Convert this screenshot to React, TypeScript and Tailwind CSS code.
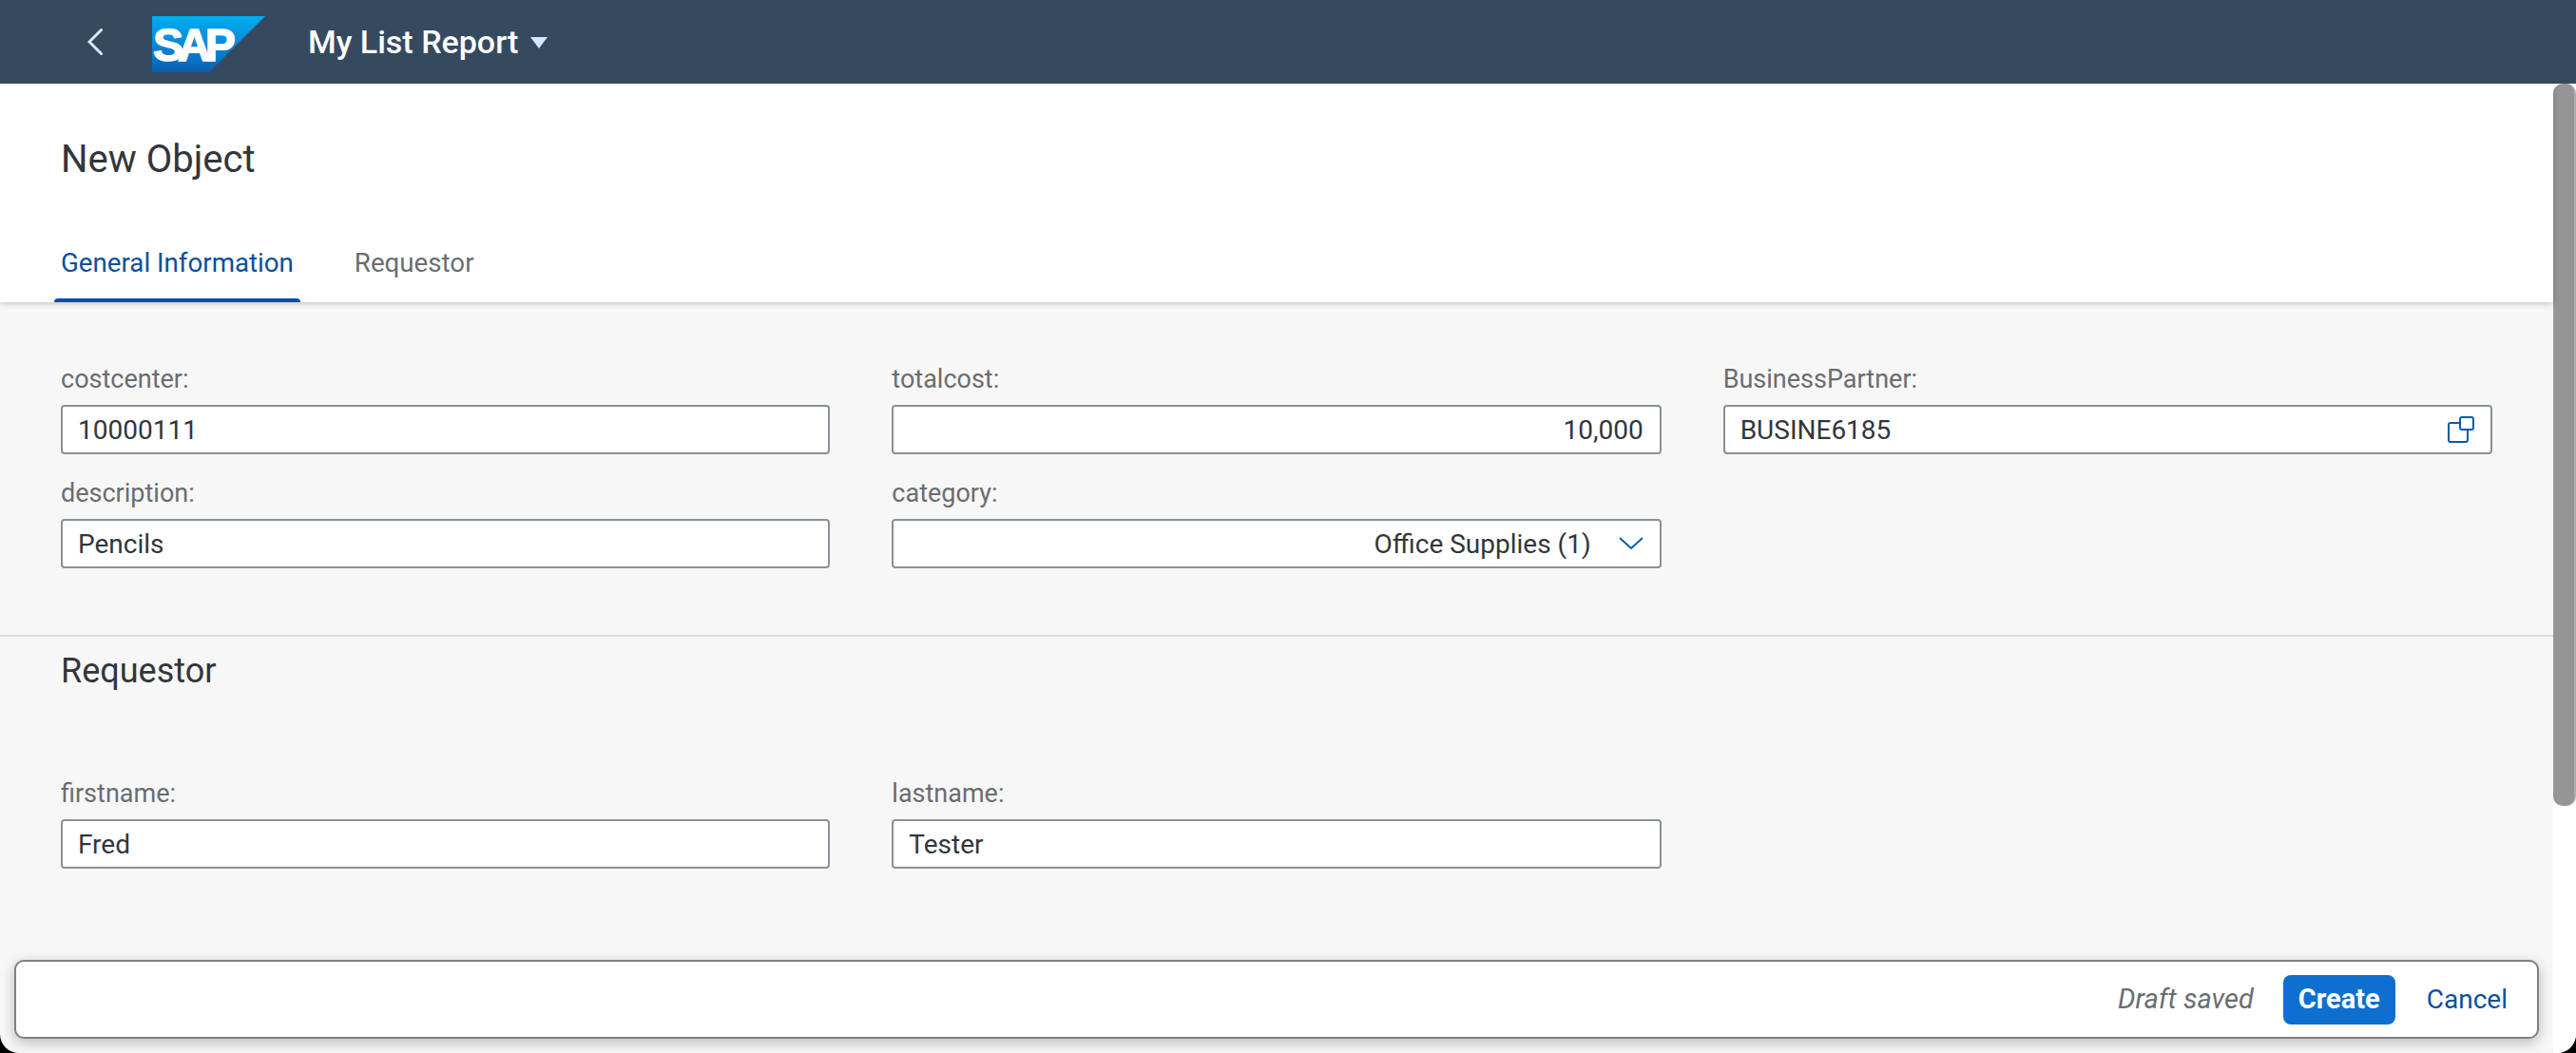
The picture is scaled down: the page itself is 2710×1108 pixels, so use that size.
const font = { fontFamily: 'Roboto, "Noto Sans", sans-serif' };

function Field({ label, value, right, icon }: { label: string; value: string; right?: boolean; icon?: React.ReactNode }) {
    return (
        <div className="flex flex-col">
            <label className="h-[48px] text-[27px] leading-[43px] text-[#6a6d70]">{label}</label>
            <div className="flex h-[52px] items-center rounded-[4px] border-2 border-[#89919a] bg-white pl-[16px] pr-[17px] text-[28px] text-[#32363a]">
                <span className={right ? "flex-1 pt-[1px] text-right" : "flex-1 pt-[1px]"}>{value}</span>
                {icon}
            </div>
        </div>
    );
}

function ValueHelpIcon() {
    return (
        <svg className="ml-3 h-[28px] w-[28px] text-[#0a5ba8]" viewBox="0 0 28 28" fill="none" stroke="currentColor" strokeWidth="2">
            <rect x="13" y="1" width="14" height="13" rx="2" />
            <path d="M12 7H3a2 2 0 0 0-2 2v16a2 2 0 0 0 2 2h16a2 2 0 0 0 2-2V15" />
        </svg>
    );
}

function DropdownIcon() {
    return (
        <svg className="ml-[29px] h-[14px] w-[26px] text-[#0a5ba8]" viewBox="0 0 26 14" fill="none" stroke="currentColor" strokeWidth="2">
            <path d="M1 1l12 11L25 1" />
        </svg>
    );
}

function SapLogo() {
    return (
        <div className="relative h-[59px] w-[119px]">
            <svg className="absolute inset-0" width="119" height="59" viewBox="0 0 119 59">
                <defs>
                    <linearGradient id="sapBlue" x1="0" y1="0" x2="0" y2="1">
                        <stop offset="0" stopColor="#00aeef" />
                        <stop offset="0.55" stopColor="#0a84d6" />
                        <stop offset="1" stopColor="#0a5fb0" />
                    </linearGradient>
                </defs>
                <polygon points="0,0 119,0 60,59 0,59" fill="url(#sapBlue)" />
            </svg>
            <span
                className="absolute left-[1px] top-[6px] text-[48px] font-bold leading-[50px] tracking-[-6px] text-white [-webkit-text-stroke:1.5px_white]"
                style={{ fontFamily: '"Liberation Sans", sans-serif' }}
            >
                SAP
            </span>
        </div>
    );
}

export default function App() {
    return (
        <div className="h-[1108px] w-[2710px] overflow-hidden bg-black" style={font}>
            <div className="relative flex h-[1108px] flex-col overflow-hidden rounded-b-[20px] bg-[#f7f7f7]">
                <header className="flex h-[88px] shrink-0 items-center bg-[#354a5f] pl-[92px]">
                    <svg className="h-[28px] w-[16px] text-[#d1e8ff]" viewBox="0 0 16 28" fill="none" stroke="currentColor" strokeWidth="3" strokeLinecap="round">
                        <path d="M14.5 1.5L2 14l12.5 12.5" />
                    </svg>
                    <div className="ml-[52px] mt-[5px]">
                        <SapLogo />
                    </div>
                    <span className="ml-[45px] text-[34px] font-medium text-white">My List Report</span>
                    <span className="ml-[13px] mt-[1px] h-0 w-0 border-x-[9px] border-t-[12px] border-x-transparent border-t-[#d1e8ff]" />
                </header>

                <div className="flex min-h-0 flex-1">
                    <main className="min-w-0 flex-1">
                        <div className="relative z-10 h-[230px] bg-white pl-[64px] shadow-[0_2px_6px_rgba(0,0,0,0.18)]">
                            <h1 className="pt-[56px] text-[40px] leading-[48px] text-[#32363a]">New Object</h1>
                            <div className="mt-[66px] flex gap-[64px]">
                                <div className="relative h-[60px] text-[27.7px] leading-[38px] text-[#0a4f9e]">
                                    General Information
                                    <span className="absolute -inset-x-[7px] bottom-0 h-[4px] rounded-t-[4px] bg-[#0a4f9e]" />
                                </div>
                                <div className="h-[60px] text-[27.7px] leading-[38px] text-[#6a6d70]">Requestor</div>
                            </div>
                        </div>

                        <section className="h-[352px] border-b-2 border-[#dcdcdc] pl-[64px] pr-[64px] pt-[60px]">
                            <div className="grid grid-cols-3 gap-x-[65px] gap-y-[20px]">
                                <Field label="costcenter:" value="10000111" />
                                <Field label="totalcost:" value="10,000" right />
                                <Field label="BusinessPartner:" value="BUSINE6185" icon={<ValueHelpIcon />} />
                                <Field label="description:" value="Pencils" />
                                <Field label="category:" value="Office Supplies (1)" right icon={<DropdownIcon />} />
                            </div>
                        </section>

                        <section className="pl-[64px] pr-[64px]">
                            <h2 className="pt-[14px] text-[36px] leading-[44px] text-[#32363a]">Requestor</h2>
                            <div className="mt-[86px] grid grid-cols-3 gap-x-[65px]">
                                <Field label="firstname:" value="Fred" />
                                <Field label="lastname:" value="Tester" />
                            </div>
                        </section>
                    </main>

                    <div className="w-[24px] shrink-0 bg-white">
                        <div className="h-[760px] rounded-[10px] border-r-2 border-[#b0b0b0] bg-[#959595]" />
                    </div>
                </div>

                <footer className="absolute bottom-[15px] left-[15px] flex h-[83px] w-[2656px] items-center justify-end rounded-[10px] border-2 border-[#808080] bg-white pr-[31px] text-[28px] shadow-[0_4px_14px_rgba(0,0,0,0.25)]">
                    <span className="text-[29px] italic text-[#6a6d70]">Draft saved</span>
                    <button className="ml-[31px] h-[52px] w-[118px] rounded-[8px] bg-[#0e6fd1] text-[29px] font-bold text-white">Create</button>
                    <button className="ml-[33px] text-[#0a4f9e]">Cancel</button>
                </footer>
            </div>
        </div>
    );
}
